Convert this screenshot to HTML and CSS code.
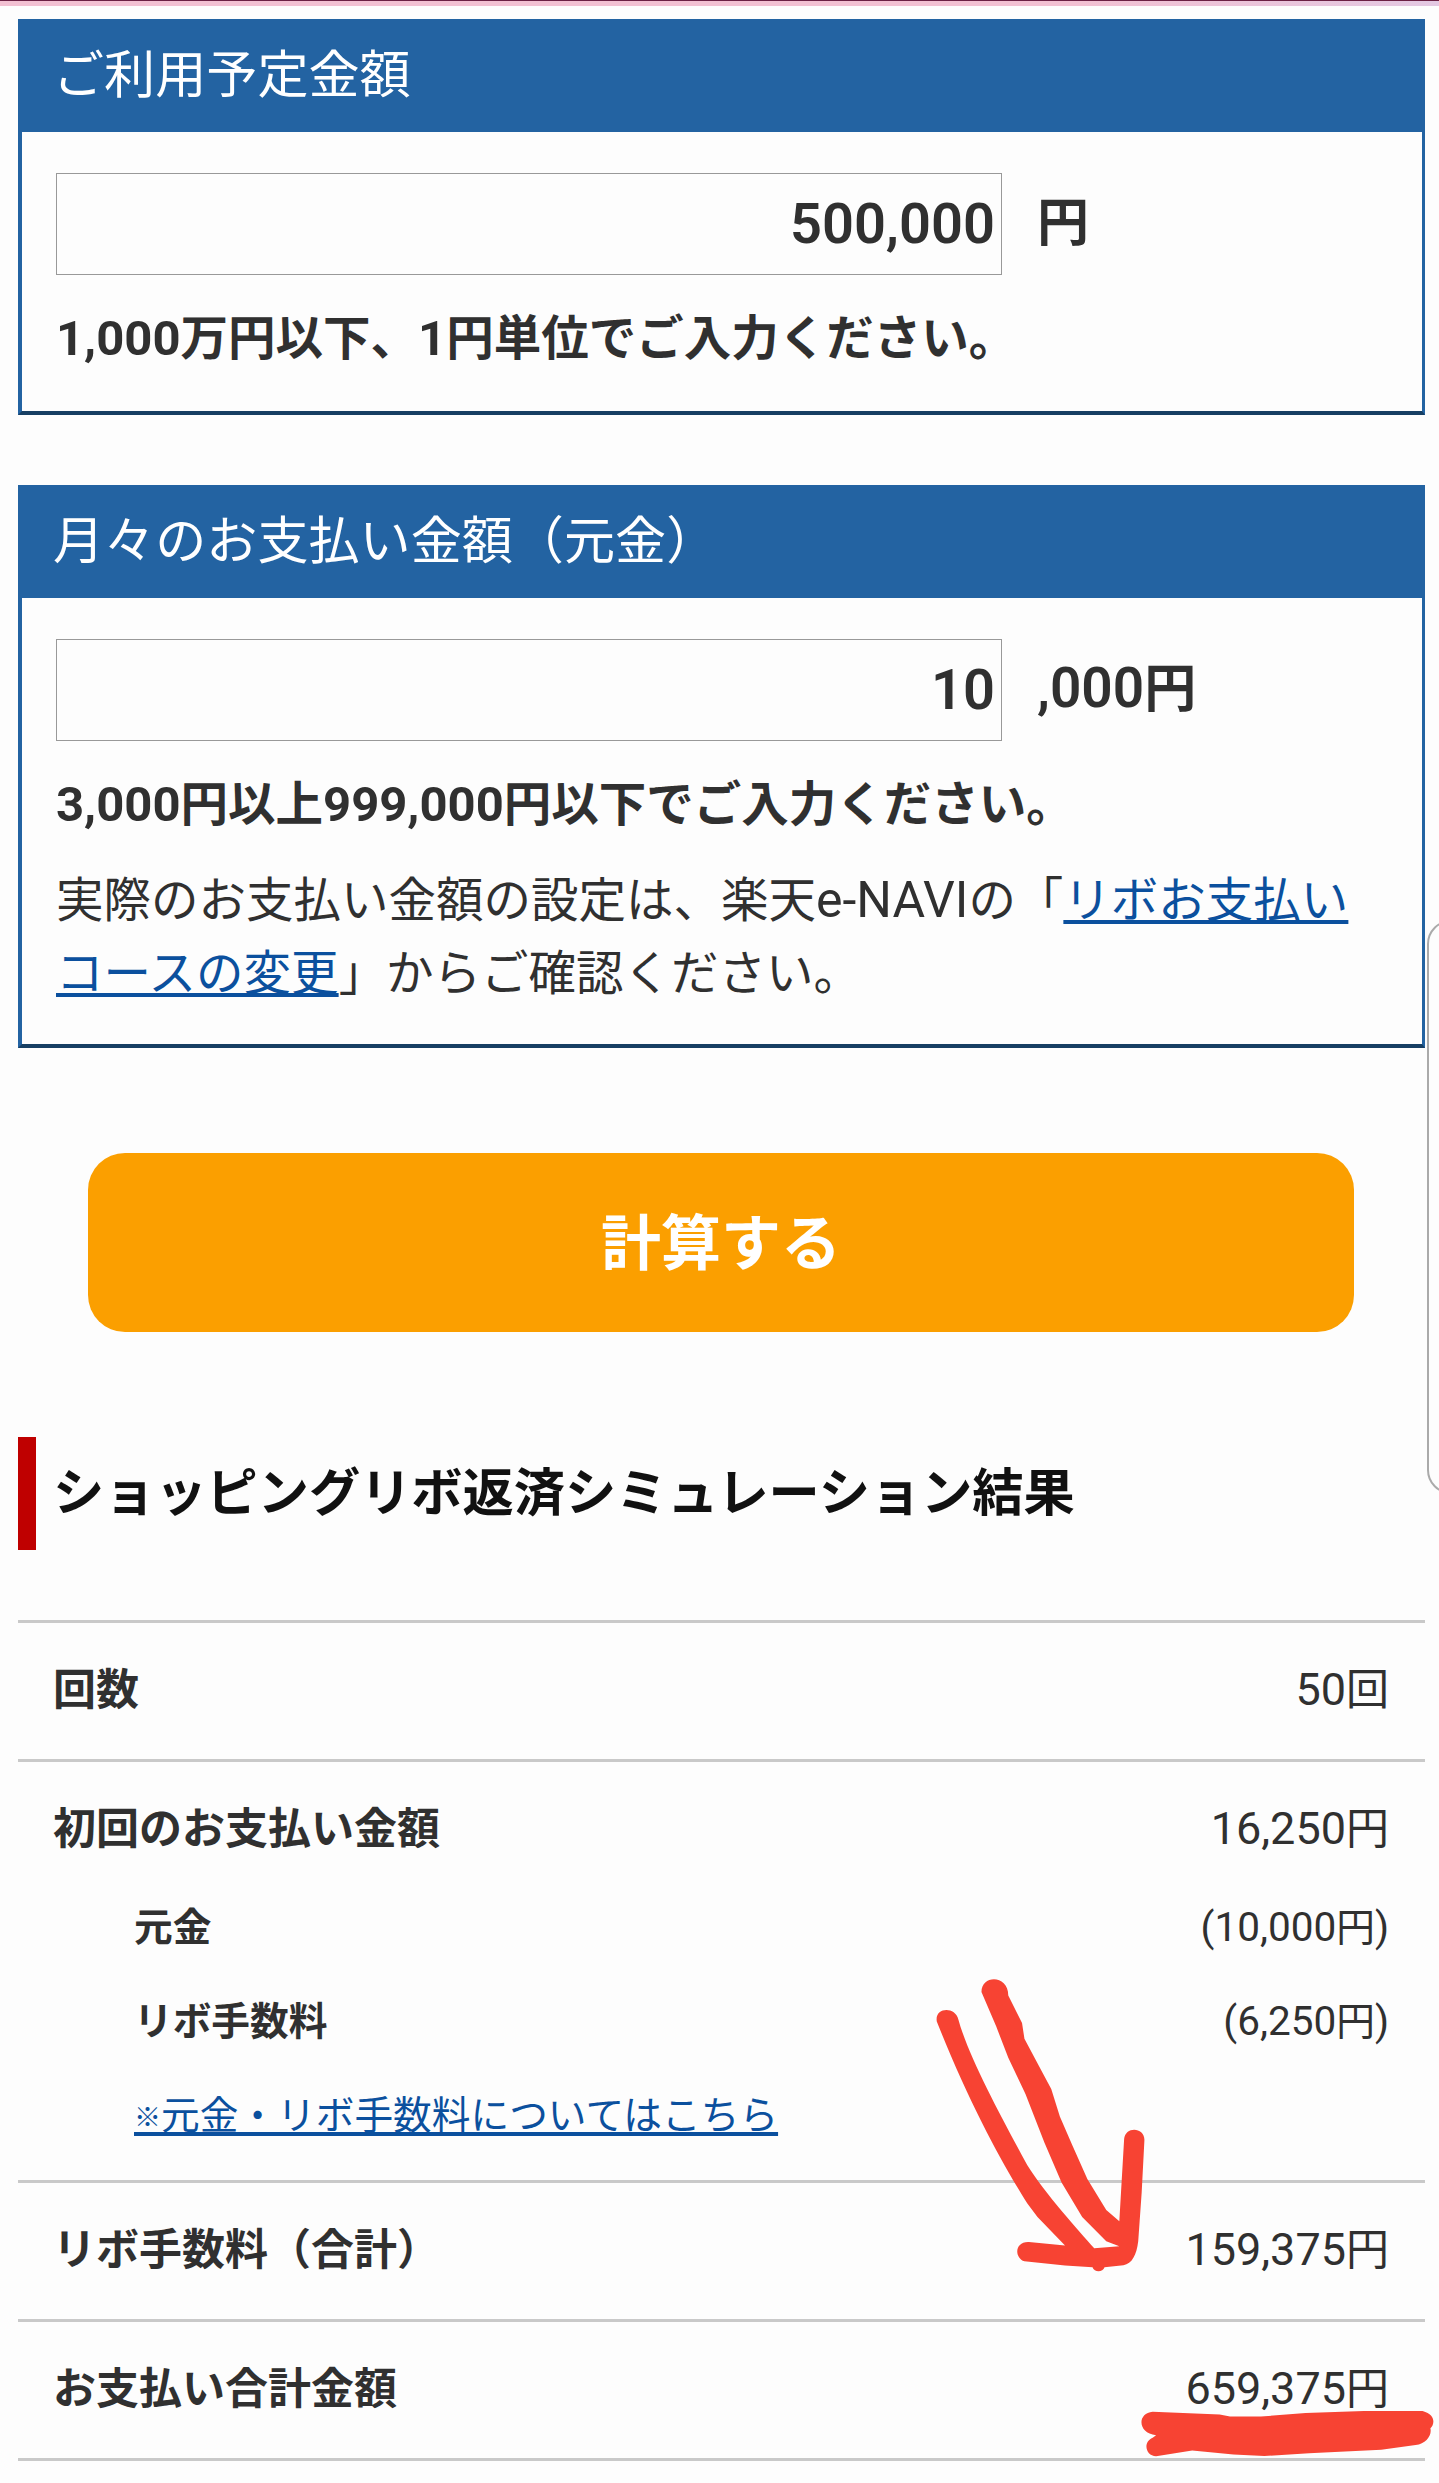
FILE: index.html
```
<!DOCTYPE html>
<html lang="ja">
<head>
    <meta charset="UTF-8">
    <meta name="viewport" content="width=device-width, initial-scale=1.0">
    <title>ショッピングリボ返済シミュレーション</title>
    <link rel="stylesheet" href="styles.css">
</head>
<body>
    <div class="top-line"></div>
    <main class="container">
        <section class="panel">
            <h2 class="panel-title">ご利用予定金額</h2>
            <div class="panel-body">
                <div class="field">
                    <input class="field-input" type="text" value="500,000">
                    <span class="field-unit">円</span>
                </div>
                <p class="field-note"><span class="num">1,000</span>万円以下、<span class="num">1</span>円単位でご入力ください。</p>
            </div>
        </section>

        <section class="panel">
            <h2 class="panel-title">月々のお支払い金額（元金）</h2>
            <div class="panel-body">
                <div class="field">
                    <input class="field-input" type="text" value="10">
                    <span class="field-unit"><span class="num">,000</span>円</span>
                </div>
                <p class="field-note"><span class="num">3,000</span>円以上<span class="num">999,000</span>円以下でご入力ください。</p>
                <p class="field-text">実際のお支払い金額の設定は、楽天<span class="num">e-NAVI</span>の「<a href="#">リボお支払い<br>コースの変更</a>」からご確認ください。</p>
            </div>
        </section>

        <button class="calc-button" type="button">計算する</button>

        <h2 class="result-title">ショッピングリボ返済シミュレーション結果</h2>

        <dl class="result">
            <div class="result-group">
                <div class="row"><dt>回数</dt><dd><span class="num">50</span>回</dd></div>
            </div>
            <div class="result-group detail">
                <div class="row"><dt>初回のお支払い金額</dt><dd><span class="num">16,250</span>円</dd></div>
                <div class="row sub"><dt>元金</dt><dd><span class="num">(10,000</span>円<span class="num">)</span></dd></div>
                <div class="row sub"><dt>リボ手数料</dt><dd><span class="num">(6,250</span>円<span class="num">)</span></dd></div>
                <div class="row sub"><a href="#"><span class="mark">※</span>元金・リボ手数料についてはこちら</a></div>
            </div>
            <div class="result-group">
                <div class="row"><dt>リボ手数料（合計）</dt><dd><span class="num">159,375</span>円</dd></div>
            </div>
            <div class="result-group">
                <div class="row"><dt>お支払い合計金額</dt><dd><span class="num">659,375</span>円</dd></div>
            </div>
        </dl>
    </main>

    <div class="edge-handle"></div>

    <!-- handwritten arrow and underline -->
    <svg class="marker" viewBox="0 0 1568 1568" preserveAspectRatio="none" aria-hidden="true">
        <path d="M237 150 C237 100 315 100 315 160 L355 240 L362 285 L410 375 L440 430 L465 510 L500 590 L545 690 L600 780 L638 812 L652 575 C655 537 712 540 711 578 L703 730 L693 870 C688 910 675 935 650 939 L595 945 C590 960 565 960 560 945 L480 940 L362 928 C330 915 335 870 375 872 L480 882 L400 800 L370 760 C300 650 200 470 107 235 C100 195 160 190 170 230 C200 340 300 520 370 650 C420 730 520 840 565 890 L638 884 L600 870 L530 800 L470 700 L420 585 L365 445 L315 340 L280 250 Z"/>
        <path d="M735 1362 L930 1370 L960 1376 L1050 1376 L1180 1366 L1350 1360 L1520 1360 C1560 1370 1555 1400 1543 1410 C1548 1430 1530 1455 1500 1458 L1400 1472 L1190 1482 L1060 1490 L970 1486 L850 1474 L745 1491 C715 1490 705 1450 735 1437 L745 1430 C690 1425 690 1365 735 1362 Z"/>
    </svg>
</body>
</html>
```

FILE: styles.css
```
* {
    margin: 0;
    padding: 0;
    box-sizing: border-box;
}

body {
    position: relative;
    height: 2483px;
    overflow: hidden;
    font-family: Roboto, 'Noto Sans CJK JP', sans-serif;
    color: #303030;
    background: #fdfdfd;
}

a {
    color: #0b509e;
    text-decoration: underline;
    text-decoration-thickness: 4px;
    text-decoration-skip-ink: none;
    text-underline-offset: 3px;
}

.num,
.mark {
    line-height: 1;
}

.top-line {
    height: 6px;
    border-top: 1px solid #6b2043;
    background: linear-gradient(90deg, #f2c0d2 0%, #f2c0d2 75%, #e3c8e2 100%);
}

.container {
    padding: 13px 14px 0 18px;
}

.panel {
    height: 396px;
    margin-bottom: 70px;
    border: 4px solid #2363a2;
    border-top: 0;
    border-right-width: 3px;
    border-bottom-color: #173f63;
}

.panel + .panel {
    height: 563px;
    margin-bottom: 105px;
}

.panel-title {
    height: 113px;
    padding: 1px 0 0 31px;
    background: #2363a2;
    color: #fff;
    font-size: 51.1px;
    font-weight: 400;
    line-height: 111px;
}

.panel-body {
    padding: 41px 34px 0;
}

.field {
    display: flex;
    align-items: center;
    gap: 35px;
}

.field-input {
    width: 946px;
    height: 102px;
    padding: 0 6px;
    border: 1px solid #999;
    background: #fdfdfd;
    color: #303030;
    font-family: inherit;
    font-size: 56px;
    font-weight: 600;
    text-align: right;
}

.field-unit {
    font-size: 52px;
    font-weight: 700;
    line-height: 102px;
}

.field-unit .num {
    font-size: 55px;
    font-weight: 600;
}

.field-note {
    margin-top: 27px;
    font-size: 47.5px;
    font-weight: 700;
    line-height: 74px;
}

.field-note .num {
    font-size: 49px;
}

.field-text {
    margin-top: 23px;
    font-size: 47.5px;
    font-weight: 400;
    line-height: 73px;
    white-space: nowrap;
}

.field-text .num {
    font-size: 50px;
}

.calc-button {
    display: block;
    width: 1266px;
    height: 179px;
    margin: 0 0 105px 70px;
    padding-bottom: 9px;
    border: 0;
    border-radius: 37px;
    background: #fb9f00;
    color: #fff;
    font-family: inherit;
    font-size: 60px;
    font-weight: 700;
}

.result-title {
    height: 113px;
    padding-left: 17px;
    border-left: 18px solid #bf0000;
    color: #111;
    font-size: 51.2px;
    font-weight: 700;
    line-height: 113px;
}

.result {
    margin-top: 70px;
    border-bottom: 3px solid #c9c9c9;
}

.result-group {
    padding: 31px 36px 32px 35px;
    border-top: 3px solid #c9c9c9;
}

.result-group.detail {
    padding-bottom: 28px;
}

.row {
    display: flex;
    justify-content: space-between;
    font-size: 43px;
    line-height: 73px;
}

.row dt {
    font-weight: 700;
}

.row dd {
    font-weight: 400;
}

.row dd .num {
    font-size: 45px;
}

.row.sub {
    margin-top: 21px;
    padding-left: 81px;
    font-size: 38.7px;
}

.row:first-child + .sub {
    margin-top: 25px;
}

.row.sub dd .num {
    font-size: 40.5px;
}

.row.sub .mark {
    font-size: 27px;
    vertical-align: 2px;
}

.edge-handle {
    position: absolute;
    top: 920px;
    right: -40px;
    width: 52px;
    height: 574px;
    border: 2px solid #aaa;
    border-radius: 24px;
}

.marker {
    position: absolute;
    top: 1940px;
    left: 900px;
    width: 539px;
    height: 543px;
    fill: #f74333;
}
```
